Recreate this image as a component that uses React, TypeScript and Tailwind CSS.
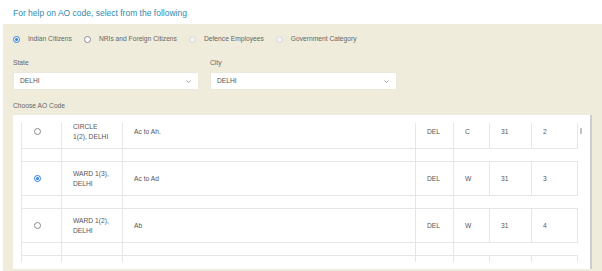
import React from 'react';

type RadioState = 'on' | 'off' | 'disabled';

const Radio: React.FC<{ state: RadioState }> = ({ state }) => {
  if (state === 'on') {
    return (
      <span className="w-[7px] h-[7px] shrink-0 rounded-full border border-[#2f7de1] bg-white flex items-center justify-center">
        <span className="w-[3px] h-[3px] rounded-full bg-[#2f7de1]" />
      </span>
    );
  }
  if (state === 'disabled') {
    return <span className="w-[7px] h-[7px] shrink-0 rounded-full border border-[#d6d6d6] bg-[#f3f3f3]" />;
  }
  return <span className="w-[7px] h-[7px] shrink-0 rounded-full border border-[#8a8a8a] bg-white" />;
};

const Chevron: React.FC = () => (
  <svg width="5" height="3" viewBox="0 0 5 3" className="shrink-0">
    <path d="M0.5 0.5 L2.5 2.5 L4.5 0.5" fill="none" stroke="#888" strokeWidth="0.8" />
  </svg>
);

const Select: React.FC<{ value: string; width: string }> = ({ value, width }) => (
  <div className={`${width} h-[18px] bg-white border border-[#ebe8dc] flex items-center justify-between pl-[6px] pr-[7px] text-[6.7px] text-[#555]`}>
    <span>{value}</span>
    <Chevron />
  </div>
);

const categories: { label: string; state: RadioState }[] = [
  { label: 'Indian Citizens', state: 'on' },
  { label: 'NRIs and Foreign Citizens', state: 'off' },
  { label: 'Defence Employees', state: 'disabled' },
  { label: 'Government Category', state: 'disabled' },
];

const rows = [
  { name: 'CIRCLE 1(2), DELHI', desc: 'Ac to Ah.', area: 'DEL', type: 'C', range: '31', no: '2', checked: false },
  { name: 'WARD 1(3), DELHI', desc: 'Ac to Ad', area: 'DEL', type: 'W', range: '31', no: '3', checked: true },
  { name: 'WARD 1(2), DELHI', desc: 'Ab', area: 'DEL', type: 'W', range: '31', no: '4', checked: false },
  { name: '', desc: '', area: '', type: '', range: '', no: '', checked: false },
];

const cell = 'border-r border-[#e6e6e6] flex items-center pl-[11px] pr-[11px]';

const App: React.FC = () => {
  return (
    <div className="w-[602px] h-[271px] bg-white overflow-hidden font-['Liberation_Sans',Arial,sans-serif]">
      {/* Heading */}
      <div className="h-[24px] flex items-center pl-[13px] pt-[2px] text-[8.5px] text-[#2f8cb0]">
        For help on AO code, select from the following
      </div>

      {/* Beige panel */}
      <div className="ml-[3px] h-[247px] bg-[#efecdc] px-[10px] pt-[9px]">
        <div className="h-[12px] flex items-center gap-[12px]">
          {categories.map((c) => (
            <div key={c.label} className="flex items-center gap-[8px]">
              <Radio state={c.state} />
              <span className="text-[6.7px] text-[#666] leading-none">{c.label}</span>
            </div>
          ))}
        </div>

        <div className="mt-[13px] flex gap-[11px]">
          <div>
            <div className="h-[10px] leading-[10px] text-[6.7px] text-[#666]">State</div>
            <div className="mt-[4px]">
              <Select value="DELHI" width="w-[186px]" />
            </div>
          </div>
          <div>
            <div className="h-[10px] leading-[10px] text-[6.7px] text-[#666]">City</div>
            <div className="mt-[4px]">
              <Select value="DELHI" width="w-[187px]" />
            </div>
          </div>
        </div>

        <div className="mt-[11px] h-[10px] leading-[10px] text-[6.7px] text-[#666]">Choose AO Code</div>

        {/* AO code list */}
        <div className="mt-[4px] h-[154px] bg-white border-r-2 border-[#cdcdcd] pl-[8px] pt-[8px] pb-[7px]">
          <div className="relative h-[139px] overflow-hidden">
            <div className="-mt-[8px] w-[557px] text-[6.7px] text-[#555] leading-[10px]">
              {rows.map((r, i) => (
                <React.Fragment key={i}>
                  <div className="h-[34px] grid grid-cols-[41px_61px_293px_38px_36px_42px_46px] border-b border-[#e6e6e6]">
                    <div className={`${cell} border-l pl-[12px]`}>
                      {r.name && <Radio state={r.checked ? 'on' : 'off'} />}
                    </div>
                    <div className={cell}>{r.name}</div>
                    <div className={cell}>{r.desc}</div>
                    <div className={cell}>{r.area}</div>
                    <div className={cell}>{r.type}</div>
                    <div className={cell}>{r.range}</div>
                    <div className={cell}>{r.no}</div>
                  </div>
                  {i < rows.length - 1 && (
                    <div className="h-[13px] grid grid-cols-[41px_61px_293px_38px_124px] border-b border-[#e6e6e6]">
                      <div className="border-l border-r border-[#e6e6e6]" />
                      <div className="border-r border-[#e6e6e6]" />
                      <div className="border-r border-[#e6e6e6]" />
                      <div className="border-r border-[#e6e6e6]" />
                      <div />
                    </div>
                  )}
                </React.Fragment>
              ))}
            </div>
            {/* scrollbar thumb */}
            <div className="absolute left-[559px] top-[5px] w-[2px] h-[6px] bg-[#c4c4c4]" />
          </div>
        </div>
      </div>
    </div>
  );
};

export default App;
